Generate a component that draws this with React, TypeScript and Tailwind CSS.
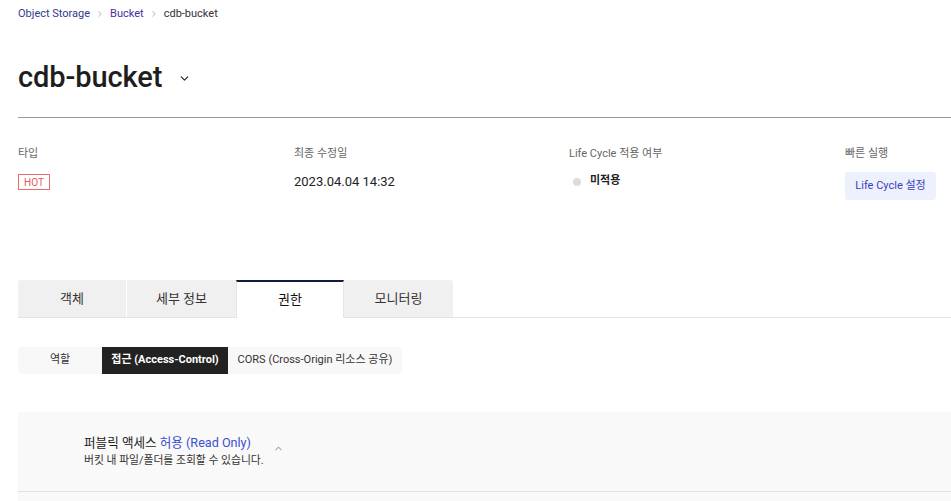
import React from 'react';
import { ChevronDown, ChevronRight, ChevronUp } from 'lucide-react';

const font = { fontFamily: 'Roboto, "Noto Sans CJK KR", sans-serif' };

const tabs = ['객체', '세부 정보', '권한', '모니터링'];

export default function App() {
  return (
    <div className="min-h-[501px] w-[951px] overflow-hidden bg-white pl-[18px] text-[#222]" style={font}>
      {/* breadcrumb */}
      <div className="flex h-[27px] items-center gap-[5px] pt-px text-[11px]">
        <span className="text-[#2f3a8f]">Object Storage</span>
        <ChevronRight size={10} className="text-[#aaa]" />
        <span className="text-[#4a2ba0]">Bucket</span>
        <ChevronRight size={10} className="text-[#aaa]" />
        <span className="text-[#333]">cdb-bucket</span>
      </div>

      {/* title */}
      <div className="mt-[30px] flex h-[40px] items-center">
        <h1 className="text-[29px] font-medium leading-[40px] tracking-[-0.1px] text-[#1e1e1e]">cdb-bucket</h1>
        <ChevronDown size={13} strokeWidth={2.5} className="ml-[16px] mt-[2px] text-[#333]" />
      </div>
      <div className="mt-[20px] h-px bg-[#9a9a9a]" />

      {/* info */}
      <div className="mt-[29px] grid grid-cols-[276px_275px_276px_1fr]">
        <div>
          <div className="text-[11px] leading-[14px] text-[#666]">타입</div>
          <div className="mt-[12px] flex h-[28px] items-start">
            <span className="mt-px inline-flex h-[16px] items-center border border-[#ea6a6a] px-[5px] text-[10px] text-[#e4575b]">HOT</span>
          </div>
        </div>
        <div>
          <div className="text-[11px] leading-[14px] text-[#666]">최종 수정일</div>
          <div className="mt-[12px] flex h-[28px] items-start">
            <span className="text-[13px] leading-[18px] text-[#222]">2023.04.04 14:32</span>
          </div>
        </div>
        <div>
          <div className="text-[11px] leading-[14px] text-[#666]">Life Cycle 적용 여부</div>
          <div className="mt-[12px] flex h-[28px] items-start gap-[9px] pl-[4px]">
            <span className="mt-[5px] h-[8px] w-[8px] rounded-full bg-[#dcdcdc]" />
            <span className="text-[11px] font-bold leading-[16px] text-[#222]">미적용</span>
          </div>
        </div>
        <div>
          <div className="text-[11px] leading-[14px] text-[#666]">빠른 실행</div>
          <div className="mt-[11px]">
            <button className="h-[28px] w-[91px] rounded-[3px] bg-[#edf0fd] text-[11px] text-[#3a3fbf]">Life Cycle 설정</button>
          </div>
        </div>
      </div>

      {/* tabs */}
      <div className="mt-[79px] flex h-[38px] border-b border-[#e4e4e4]">
        {tabs.map((t, i) => {
          const active = i === 2;
          return (
            <div
              key={t}
              className={
                active
                  ? '-mb-px flex w-[108px] items-center justify-center border-l border-r border-t-2 border-l-[#e4e4e4] border-r-[#e4e4e4] border-t-[#141a3c] bg-white pb-[1px] text-[13px] text-[#111]'
                  : i === 0
                  ? 'flex w-[109px] items-center justify-center rounded-tl-[3px] border-r border-white bg-[#f0f0f0] text-[13px] text-[#333]'
                  : i === 3
                  ? 'flex w-[109px] items-center justify-center rounded-tr-[3px] bg-[#f0f0f0] text-[13px] text-[#333]'
                  : 'flex w-[109px] items-center justify-center bg-[#f0f0f0] text-[13px] text-[#333]'
              }
            >
              {t}
            </div>
          );
        })}
      </div>

      {/* sub tabs */}
      <div className="mt-[29px] flex h-[27px] w-[384px] overflow-hidden rounded-[3px] bg-[#f8f8f8] text-[11px]">
        <div className="flex w-[84px] items-center justify-center text-[#333]">역할</div>
        <div className="flex w-[126px] items-center justify-center bg-[#222] font-bold text-white">접근 (Access-Control)</div>
        <div className="flex flex-1 items-center justify-center text-[#333]">CORS (Cross-Origin 리소스 공유)</div>
      </div>

      {/* panel */}
      <div className="mt-[38px] h-[100px] bg-[#f9f9f9]">
        <div className="flex h-[80px] items-center border-b border-[#e2e2e2] pl-[66px]">
          <div>
            <div className="text-[12.6px] leading-[18px] text-[#222]">
              퍼블릭 액세스 <span className="text-[#3a4fd0]">허용 (Read Only)</span>
            </div>
            <div className="text-[10.8px] leading-[17px] text-[#333]">버킷 내 파일/폴더를 조회할 수 있습니다.</div>
          </div>
          <ChevronUp size={11} strokeWidth={2} className="ml-[9px] mt-[-6px] text-[#777]" />
        </div>
      </div>
    </div>
  );
}
